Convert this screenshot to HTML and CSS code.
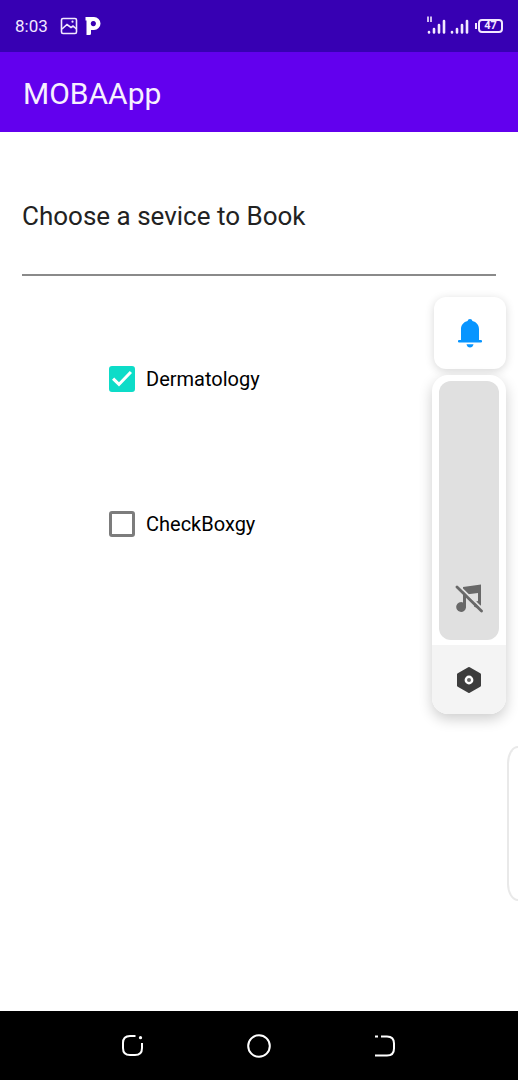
FILE: index.html
```
<!DOCTYPE html>
<html lang="en">
<head>
<meta charset="utf-8">
<meta name="viewport" content="width=device-width, initial-scale=1">
<title>MOBAApp</title>
<link rel="stylesheet" href="styles.css">
</head>
<body>
<div class="status-bar">
  <div class="status-group">
    <span class="clock">8:03</span>
    <svg class="icon-image" width="18" height="18" viewBox="0 0 18 18" fill="none" stroke="currentColor" stroke-width="1.6" aria-hidden="true">
      <rect x="1.500" y="1.500" width="15" height="15" rx="1.500"/>
      <path d="M2 12l5-4.500 4 3 2-1.500 3.500 3"/>
      <circle cx="12.500" cy="4.700" r="1.100" fill="currentColor" stroke="none"/>
    </svg>
    <svg class="icon-p" width="16" height="20" viewBox="0 0 16 20" aria-hidden="true">
      <path fill="currentColor" fill-rule="evenodd" d="M.5 1H9a6.500 6.500 0 0 1 0 13H6v3.500a1.500 1.500 0 0 1-1.500 1.500H1.500V4.500H.5zM8.300 5a2.600 2.600 0 1 0 .1 0z"/>
    </svg>
  </div>
  <div class="status-group status-right">
    <svg width="44" height="20" viewBox="0 0 44 20" fill="none" stroke="currentColor" aria-hidden="true">
      <path d="M2 .5v5.500M5 .5v5.500" stroke-width="1.600"/>
      <g stroke-width="2.600" stroke-linecap="round">
        <path d="M3 16v.5M8 13v3.500M13 9v7.500M18 5v11.500"/>
        <path d="M26 16v.5M31 13v3.500M36 9v7.500M41 5v11.500"/>
      </g>
    </svg>
    <span class="battery">47</span>
  </div>
</div>
<header class="app-bar"><h1>MOBAApp</h1></header>
<main class="content">
  <input class="service" type="text" aria-label="Service" value="Choose a sevice to Book">
  <div class="options">
    <label class="option"><input type="checkbox" checked><span>Dermatology</span></label>
    <label class="option"><input type="checkbox"><span>CheckBoxgy</span></label>
  </div>
  <aside class="volume">
    <button class="ringer" type="button" aria-label="Ringer">
      <svg width="24" height="30" viewBox="0 0 24 30" fill="#0895ff" aria-hidden="true">
        <path d="M12 1c1.300 0 2.200.8 2.400 2 4 1 6.600 4 6.600 8.200V22h2a1.200 1.200 0 0 1 0 2.500H1A1.200 1.200 0 0 1 1 22h2V11.200C3 7 5.600 4 9.600 3c.2-1.200 1.100-2 2.400-2z"/>
        <path d="M8.500 26.200h7c-.3 2-1.800 3.300-3.500 3.300s-3.200-1.300-3.500-3.300z"/>
      </svg>
    </button>
    <div class="panel">
      <button class="track" type="button" aria-label="Media volume muted">
        <svg width="28" height="30" viewBox="0 0 28 30" aria-hidden="true">
          <path d="M8 3L26 .5V21a4.500 4.500 0 0 1-7 1.500q0-5 4-5.500V9L11 10.500V23.500A4.900 4.900 0 1 1 8 18.500z" fill="#686868"/>
          <path d="M3.500 1.500L28 25.500" stroke="#e0e0e0" stroke-width="2"/>
          <path d="M2 3L26.500 27" stroke="#686868" stroke-width="2.800" stroke-linecap="round"/>
        </svg>
      </button>
      <button class="settings" type="button" aria-label="Sound settings">
        <svg width="26" height="28" viewBox="0 0 26 28" aria-hidden="true">
          <path d="M13 2.500L23.500 8.500v11L13 25.500 2.500 19.500v-11z" fill="#3d3d3d" stroke="#3d3d3d" stroke-width="3" stroke-linejoin="round"/>
          <circle cx="13" cy="14" r="3.200" fill="#666" stroke="#fff" stroke-width="2.400"/>
        </svg>
      </button>
    </div>
  </aside>
  <div class="edge-panel"></div>
</main>
<nav class="nav-bar">
  <button type="button" aria-label="Recent apps">
    <svg width="24" height="24" viewBox="0 0 24 24" fill="none" stroke="currentColor" stroke-width="2" aria-hidden="true">
      <path d="M14.500 2H9Q2 2 2 9v5q0 7 7 7h5q7 0 7-7V9"/>
      <circle cx="19.500" cy="3.700" r="1.600" fill="currentColor" stroke="none"/>
    </svg>
  </button>
  <button type="button" aria-label="Home">
    <svg width="24" height="24" viewBox="0 0 24 24" fill="none" stroke="currentColor" stroke-width="2" aria-hidden="true"><circle cx="12" cy="12" r="10.800"/></svg>
  </button>
  <button type="button" aria-label="Back">
    <svg width="24" height="24" viewBox="0 0 24 24" fill="none" stroke="currentColor" stroke-width="2" aria-hidden="true">
      <path d="M8 2.500h6q7 0 7 7v5q0 7-7 7H2M2 2.500h3"/>
    </svg>
  </button>
</nav>
</body>
</html>
```
FILE: styles.css
```
* { box-sizing: border-box; }
body {
  margin: 0;
  min-height: 100vh;
  display: flex;
  flex-direction: column;
  background: #fff;
  color: #000;
  font-family: Roboto, "Liberation Sans", sans-serif;
}
button {
  display: flex;
  align-items: center;
  justify-content: center;
  padding: 0;
  border: 0;
  background: none;
  color: inherit;
}
.status-bar {
  display: flex;
  align-items: center;
  justify-content: space-between;
  height: 52px;
  padding: 0 15px;
  background: #3700b3;
  color: #f2e8ff;
}
.status-group { display: flex; align-items: center; }
.status-right { gap: 8px; }
.clock { font-size: 17px; }
.icon-image { margin-left: 12px; }
.icon-p { margin-left: 7px; color: #fff; }
.battery {
  position: relative;
  width: 25px;
  height: 14px;
  border: 2px solid currentColor;
  border-radius: 4px;
  font-size: 11px;
  font-weight: 700;
  line-height: 10px;
  text-align: center;
}
.battery::before {
  content: "";
  position: absolute;
  top: 2px;
  left: -5px;
  width: 2px;
  height: 6px;
  background: currentColor;
}
.app-bar {
  display: flex;
  align-items: center;
  height: 80px;
  padding: 3px 23px 0;
  background: #6200ee;
  color: #f7efff;
}
.app-bar h1 { margin: 0; font-size: 30px; font-weight: 400; }
.content {
  position: relative;
  flex: 1;
  padding: 48px 22px 0;
}
.service {
  display: block;
  width: 100%;
  height: 96px;
  padding: 0 0 23px;
  border: 0;
  border-bottom: 2px solid #8a8a8a;
  border-radius: 0;
  outline: 0;
  background: none;
  color: #222;
  font: 400 26px Roboto, "Liberation Sans", sans-serif;
}
.options {
  display: flex;
  flex-direction: column;
  align-items: flex-start;
  gap: 105px;
  padding: 83px 0 0 87px;
}
.option {
  display: flex;
  align-items: center;
  gap: 11px;
  height: 40px;
  font-size: 20px;
}
.option input {
  appearance: none;
  display: grid;
  place-items: center;
  width: 26px;
  height: 26px;
  margin: 0;
  border: 3px solid #7c7c7c;
  border-radius: 3px;
}
.option input:checked { border-color: #0ddcc8; background: #0ddcc8; }
.option input:checked::before {
  content: "";
  width: 20px;
  height: 16px;
  background: #fff;
  clip-path: polygon(0 54%, 11% 40%, 35% 70%, 89% 0, 100% 13%, 35% 97%);
}
.volume { position: absolute; top: 165px; right: 12px; width: 74px; }
.ringer {
  width: 72px;
  height: 72px;
  margin: 0 0 6px 2px;
  border-radius: 12px;
  background: #fff;
  box-shadow: 0 2px 10px rgba(0, 0, 0, .16);
}
.panel {
  overflow: hidden;
  border-radius: 16px;
  background: #fff;
  box-shadow: 0 5px 14px rgba(0, 0, 0, .2);
}
.track {
  align-items: flex-end;
  width: 60px;
  height: 259px;
  margin: 6px 7px 5px;
  padding-bottom: 26px;
  border-radius: 12px;
  background: #e0e0e0;
}
.settings { width: 100%; height: 69px; background: #f4f4f4; }
.edge-panel {
  position: absolute;
  top: 614px;
  right: 0;
  width: 11px;
  height: 155px;
  border: 2px solid #e9e9e9;
  border-right: 0;
  border-radius: 14px 0 0 14px / 22px 0 0 22px;
}
.nav-bar {
  display: flex;
  align-items: center;
  justify-content: space-between;
  height: 69px;
  padding: 0 121px;
  background: #000;
  color: #fff;
}
```
